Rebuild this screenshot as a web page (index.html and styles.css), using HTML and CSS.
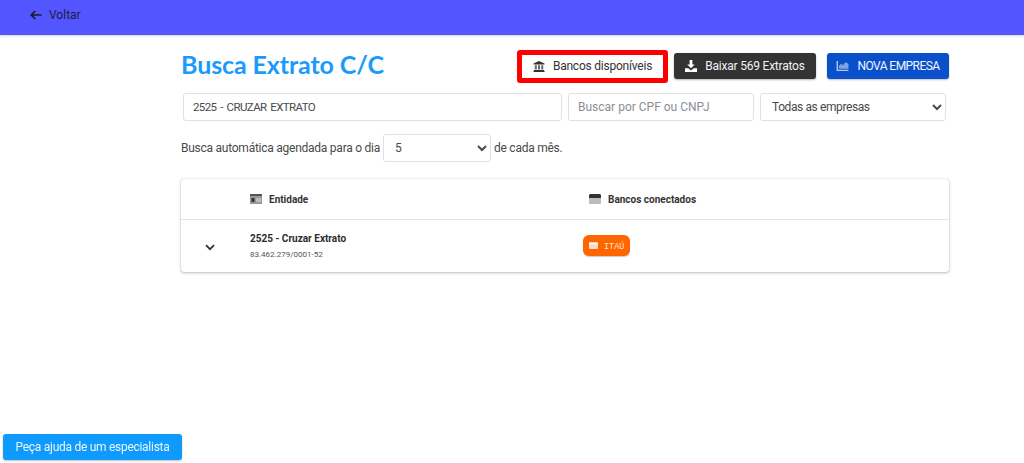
FILE: index.html
```html
<!DOCTYPE html>
<html lang="pt-BR">
<head>
<meta charset="utf-8">
<title>Busca Extrato C/C</title>
<link rel="stylesheet" href="styles.css">
</head>
<body>
<header class="topbar">
  <a class="back" href="#">
    <svg class="back-icon" viewBox="0 0 12 10" width="12" height="10"><path d="M5.2 1 1.200 5l4 4M1.500 5H11.500" fill="none" stroke="#1a1a2e" stroke-width="1.700"/></svg>
    <span>Voltar</span>
  </a>
</header>
<main class="page">
  <div class="title-row">
    <h1 class="title">Busca Extrato C/C</h1>
    <div class="actions">
      <button class="btn btn-light">
        <svg width="12" height="11" viewBox="0 0 14 13"><path d="M7 0 .5 3v1.200h13V3z" fill="#333"/><path d="M2 5h2.400v5H2zM5.800 5h2.400v5H5.800zM9.600 5H12v5H9.600z" fill="#666"/><path d="M1 10.500h12V12H1zM.2 12h13.600v1H.2z" fill="#333"/></svg>
        <span>Bancos disponíveis</span>
      </button>
      <button class="btn btn-dark">
        <svg width="12" height="12" viewBox="0 0 13 13"><path d="M5 0h3v5h2.500L6.500 9 2.500 5H5zM0 9h3.500l3 2.300L9.500 9H13v4H0z" fill="#fff"/></svg>
        <span>Baixar 569 Extratos</span>
      </button>
      <button class="btn btn-blue">
        <svg width="13" height="10" viewBox="0 0 13 11"><path d="M0 0h1.500v9.500H13V11H0z" fill="#b4caf0"/><path d="M2.500 8.500V5.500L5 3l2 1.700L10 1.500l3 1.500v5.500z" fill="#7fa4e6"/></svg>
        <span>NOVA EMPRESA</span>
      </button>
    </div>
  </div>
  <div class="filters">
    <input class="field field-main" type="text" value="2525 - CRUZAR EXTRATO">
    <input class="field field-doc" type="text" placeholder="Buscar por CPF ou CNPJ">
    <select class="field field-select"><option>Todas as empresas</option></select>
  </div>
  <div class="schedule">
    <span>Busca automática agendada para o dia</span>
    <select class="field field-day"><option>5</option></select>
    <span>de cada mês.</span>
  </div>
  <section class="card">
    <div class="row row-head">
      <div class="col-toggle"></div>
      <div class="col-entity head-cell">
        <svg width="12" height="10" viewBox="0 0 12 10"><path d="M0 0h12v10H0z" fill="#999"/><path d="M0 0h12v2H0z" fill="#555"/><path d="M1.500 4h3v4h-3z" fill="#333"/><path d="M6 4.500h5v1H6zM6 6.500h5v1H6z" fill="#ddd"/></svg>
        <span>Entidade</span>
      </div>
      <div class="col-banks head-cell">
        <svg width="12" height="10" viewBox="0 0 12 10"><rect width="12" height="10" rx="1.500" fill="#bbb"/><path d="M0 1.500A1.500 1.500 0 0 1 1.500 0h9A1.500 1.500 0 0 1 12 1.500V4H0z" fill="#333"/></svg>
        <span>Bancos conectados</span>
      </div>
    </div>
    <div class="row row-body">
      <div class="col-toggle">
        <svg width="10" height="7" viewBox="0 0 10 7"><path d="M1 1.200 5 5.200l4-4" fill="none" stroke="#333" stroke-width="1.800"/></svg>
      </div>
      <div class="col-entity">
        <div class="entity-name">2525 - Cruzar Extrato</div>
        <div class="entity-doc">83.462.279/0001-52</div>
      </div>
      <div class="col-banks">
        <span class="bank-badge">
          <svg width="9" height="7" viewBox="0 0 9 7"><rect width="9" height="7" rx="1" fill="#ffd9bd"/><path d="M0 1h9v1.500H0z" fill="#ffffff"/></svg>
          <span class="bank-name">ITAÚ</span>
        </span>
      </div>
    </div>
  </section>
</main>
<button class="help">Peça ajuda de um especialista</button>
</body>
</html>
```

FILE: styles.css
```css
* { box-sizing: border-box; }
html, body { height: 100%; }
body {
  margin: 0;
  background: #fff;
  color: #444;
  font-family: "Roboto", "Noto Sans", sans-serif;
  font-size: 13px;
  overflow: hidden;
}
.topbar {
  height: 35px;
  background: #5356fe;
  display: flex;
  align-items: center;
  padding: 0 0 5px 30px;
  box-shadow: 0 1px 2px rgba(60, 60, 120, .25);
}
.back {
  display: flex;
  align-items: center;
  gap: 7px;
  color: #1c1c3c;
  font-size: 12px;
  text-decoration: none;
}
.page {
  width: 768px;
  margin-left: 181px;
}
.title-row {
  display: flex;
  align-items: center;
  justify-content: space-between;
  padding-top: 4px;
  height: 58px;
}
.title {
  margin: 0 0 4px;
  color: #1a9bfc;
  font-family: "Lato", sans-serif;
  font-size: 25px;
  font-weight: 700;
  letter-spacing: -.1px;
}
.actions {
  display: flex;
  align-items: center;
}
.btn {
  display: flex;
  align-items: center;
  justify-content: center;
  gap: 8px;
  height: 26px;
  border: 0;
  border-radius: 3px;
  font-family: inherit;
  font-size: 12px;
  font-weight: 400;
  letter-spacing: -.22px;
  padding: 0;
}
.btn-light {
  width: 151px;
  height: 33px;
  background: #fff;
  border: 5px solid #f00;
  color: #333;
  margin-right: 6px;
}
.btn-dark {
  width: 142px;
  background: #333;
  color: #f2f2f2;
  margin-right: 11px;
  box-shadow: 0 1px 2px rgba(0, 0, 0, .3);
}
.btn-blue {
  width: 122px;
  background: #0b50cb;
  color: #f2f6ff;
  letter-spacing: -.55px;
  box-shadow: 0 1px 2px rgba(0, 0, 0, .25);
}
.filters {
  display: flex;
  gap: 6px;
  margin-left: 2px;
}
.field {
  height: 28px;
  border: 1px solid #dfe1e4;
  border-radius: 3px;
  background: #fff;
  color: #4a4a4a;
  font-family: inherit;
  font-size: 12px;
  padding: 0 9px;
}
.field::placeholder { color: #8a8f96; opacity: 1; }
.field-main { width: 379px; font-size: 11.500px; letter-spacing: -.6px; word-spacing: 1.500px; }
.field-doc { width: 186px; }
.field-select { width: 186px; padding-left: 7px; letter-spacing: -.4px; }
.schedule {
  display: flex;
  align-items: center;
  gap: 3px;
  margin-top: 13px;
  font-size: 12px;
  letter-spacing: -.25px;
  color: #4a4a4a;
}
.field-day { width: 108px; padding-left: 7px; }
.card {
  margin-top: 17px;
  border-radius: 3px;
  box-shadow: 0 0 1px rgba(0, 0, 0, .3), 0 1px 3px rgba(0, 0, 0, .25);
  background: #fff;
}
.row { display: flex; }
.row-head {
  height: 41px;
  align-items: center;
  border-bottom: 1px solid #e4e4e4;
}
.row-body {
  height: 52px;
  align-items: center;
}
.col-toggle {
  width: 69px;
  display: flex;
  justify-content: center;
  padding: 2px 12px 0 0;
}
.col-entity { width: 339px; }
.col-banks { flex: 1; }
.head-cell {
  display: flex;
  align-items: center;
  gap: 7px;
  font-size: 10px;
  font-weight: 700;
  color: #333;
}
.entity-name {
  margin-top: -1px;
  font-size: 10px;
  font-weight: 700;
  color: #2c2c2c;
}
.entity-doc {
  margin-top: 6px;
  font-size: 8px;
  color: #555;
}
.col-banks .bank-badge { margin-left: -6px; }
.bank-badge {
  display: inline-flex;
  align-items: center;
  gap: 6px;
  height: 21px;
  width: 47px;
  padding-left: 6px;
  margin-top: -1px;
  border-radius: 6px;
  background: #ff6600;
  color: #ffe9d9;
  font-family: "Liberation Mono", monospace;
  font-size: 8.500px;
  box-shadow: 0 1px 1px rgba(0, 0, 0, .2);
}
.bank-name { padding-top: 2px; }
.help {
  position: fixed;
  left: 3px;
  top: 434px;
  width: 179px;
  height: 26px;
  border: 0;
  border-radius: 3px;
  background: #0f9bfd;
  color: #eaf6ff;
  font-family: inherit;
  font-size: 12px;
  font-weight: 400;
  letter-spacing: -.28px;
  box-shadow: 0 1px 2px rgba(0, 0, 0, .25);
}
```
